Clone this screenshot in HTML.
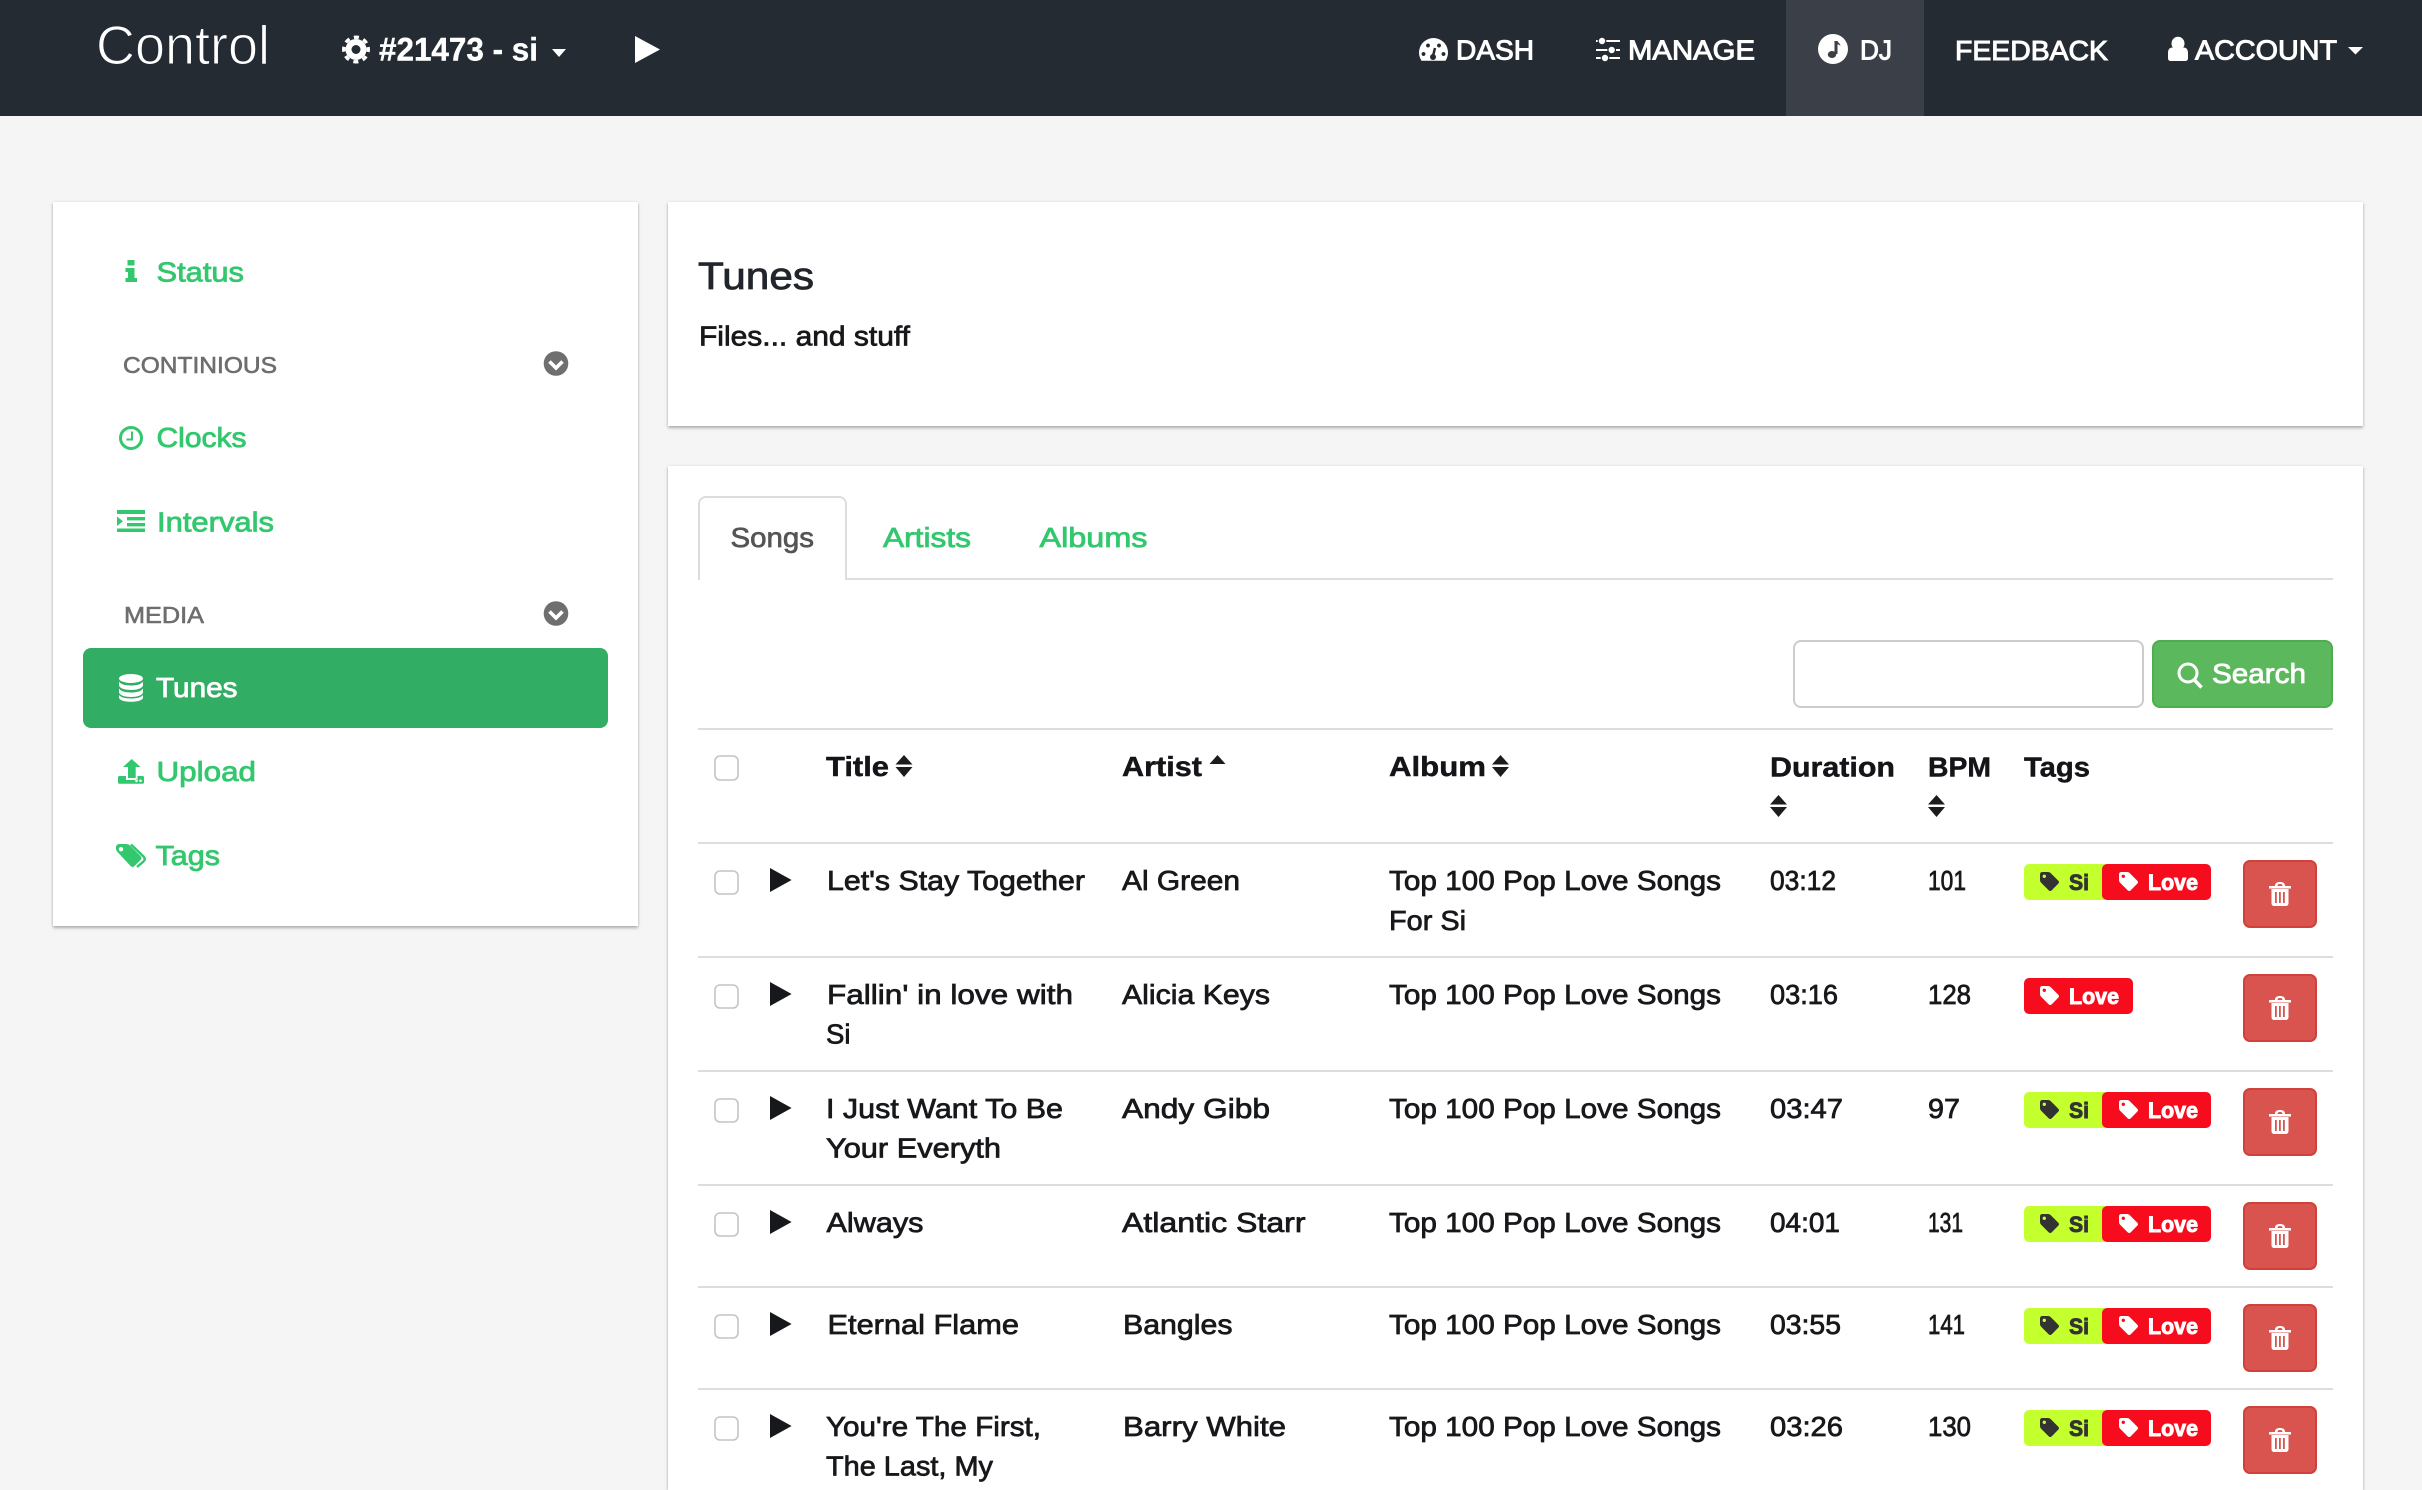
<!DOCTYPE html>
<html lang="en"><head><meta charset="utf-8"><title>Control - Tunes</title>
<style>
html,body{margin:0;padding:0;width:2422px;height:1490px;overflow:hidden;background:#f5f5f5;font-family:"Liberation Sans",sans-serif}
.a{position:absolute;box-sizing:border-box}
.card{background:#fff;box-shadow:0 2px 3px rgba(0,0,0,.28),0 0 2px rgba(0,0,0,.1)}
svg{position:absolute;left:0;top:0;display:block}
text{font-family:"Liberation Sans",sans-serif;font-size:28px}
.t{fill:#17181b;stroke:#17181b;stroke-width:.75px}
.h{fill:#141518;font-weight:700;stroke:#141518;stroke-width:.45px}
.g{fill:#33c76e;stroke:#33c76e;stroke-width:.8px}
.n{fill:#fff;stroke:#fff;stroke-width:1px}
.s{fill:#6f6d6d;font-size:23px;stroke:#6f6d6d;stroke-width:.6px}
.bw{fill:#fff;font-size:22px;font-weight:700;stroke:#fff;stroke-width:.9px}
.bd{fill:#333;font-size:22px;font-weight:700;stroke:#333;stroke-width:.9px}
</style></head><body>
<div class="a" style="left:0;top:0;width:2422px;height:116px;background:#242b33"></div>
<div class="a" style="left:1786px;top:0;width:138px;height:116px;background:#3b3f47"></div>
<div class="a card" style="left:53px;top:202px;width:585px;height:724px"></div>
<div class="a" style="left:83px;top:648px;width:525px;height:80px;background:#32ad64;border-radius:8px"></div>
<div class="a card" style="left:668px;top:202px;width:1695px;height:224px"></div>
<div class="a card" style="left:668px;top:466px;width:1695px;height:1024px"></div>
<div class="a" style="left:698px;top:578px;width:1635px;height:2px;background:#ddd"></div>
<div class="a" style="left:698px;top:496px;width:149px;height:84px;background:#fff;border:2px solid #ddd;border-bottom:0;border-radius:8px 8px 0 0"></div>
<div class="a" style="left:1793px;top:640px;width:351px;height:68px;background:#fff;border:2px solid #ccc;border-radius:8px"></div>
<div class="a" style="left:2152px;top:640px;width:181px;height:68px;background:#5cb85c;border:2px solid #4cae4c;border-radius:8px"></div>
<div class="a" style="left:698px;top:728px;width:1635px;height:2px;background:#ddd"></div>
<div class="a" style="left:698px;top:842px;width:1635px;height:2px;background:#ddd"></div>
<div class="a" style="left:698px;top:956px;width:1635px;height:2px;background:#ddd"></div>
<div class="a" style="left:698px;top:1070px;width:1635px;height:2px;background:#ddd"></div>
<div class="a" style="left:698px;top:1184px;width:1635px;height:2px;background:#ddd"></div>
<div class="a" style="left:698px;top:1286px;width:1635px;height:2px;background:#ddd"></div>
<div class="a" style="left:698px;top:1388px;width:1635px;height:2px;background:#ddd"></div>

<svg width="2422" height="1490" viewBox="0 0 2422 1490" xmlns="http://www.w3.org/2000/svg">
<defs>
<g id="sort"><path d="M8.5 0L17 9.5H0zM0 12H17L8.5 22z" fill="#1c1c1e"/></g>
<g id="chev"><circle cx="0" cy="0" r="12.3" fill="#6f6f6f"/><path d="M-6.5-2L0 4.5 6.500-2" fill="none" stroke="#fff" stroke-width="3.6"/></g>
<g id="ctl">
<rect x="715" y="28" width="23" height="23" rx="5" fill="#fff" stroke="#c4c4c4" stroke-width="1.6"/>
<path d="M770 25L791.600 37 770 49z" fill="#17181b"/>
<rect x="2244" y="18" width="72" height="66" rx="6" fill="#d9534f" stroke="#d0413c" stroke-width="2"/>
<g fill="#fff"><path d="M2269 43h22v2.500h-22zM2275 43c0-3 2-4 5-4s5 1 5 4h-2.500c0-1.500-1-2-2.500-2s-2.500.5-2.500 2z"/>
<path fill-rule="evenodd" d="M2271.500 46h17v14c0 2-1 3-3 3h-11c-2 0-3-1-3-3zM2275 49v11h1.800V49zM2279 49v11h1.800V49zM2283 49v11h1.800V49z"/></g>
</g>
<path id="tag" fill-rule="evenodd" d="M0 2.500Q0 0 2.500 0H8Q9.600 0 10.600 1L18.200 8.600Q19.800 10.200 18.200 11.800L11.800 18.200Q10.200 19.800 8.600 18.200L1 10.600Q0 9.600 0 8zM4.300 2.600A1.700 1.700 0 1 0 4.301 6 1.700 1.700 0 1 0 4.300 2.600z"/>
</defs>

<!-- navbar -->
<text x="96" y="64" textLength="174" lengthAdjust="spacingAndGlyphs" style="font-size:55px;fill:#fff;stroke:#242b33;stroke-width:1.1px">Control</text>
<circle cx="356" cy="49.500" r="7.500" fill="none" stroke="#fff" stroke-width="6"/>
<circle cx="356" cy="49.500" r="12.300" fill="none" stroke="#fff" stroke-width="3.400" stroke-dasharray="5 4.660" transform="rotate(-11.500 356 49.500)"/>
<text x="379" y="60.500" textLength="159" lengthAdjust="spacingAndGlyphs" style="font-size:32px;font-weight:700;fill:#fff;stroke:#fff;stroke-width:.4px">#21473 - si</text>
<path d="M552 49H566L559 57z" fill="#fff"/>
<path d="M635 36L660 49.500 635 63z" fill="#fff"/>

<path fill="#fff" fill-rule="evenodd" d="M1421.500 60.700A14.500 14.500 0 1 1 1445.500 60.700zM1428 43.500a2 2 0 1 0 .01 0zM1439 43.500a2 2 0 1 0 .01 0zM1423.500 52a2 2 0 1 0 .01 0zM1443.500 52a2 2 0 1 0 .01 0z"/>
<path d="M1435 48L1433 56" stroke="#242b33" stroke-width="2.500" fill="none"/>
<circle cx="1433" cy="57" r="3" fill="#242b33"/>
<text x="1456" y="59.500" textLength="78" lengthAdjust="spacingAndGlyphs" class="n">DASH</text>
<g fill="#fff"><rect x="1596" y="40" width="24" height="2"/><rect x="1596" y="49" width="24" height="2"/><rect x="1596" y="57" width="24" height="2"/></g>
<g fill="#fff" stroke="#242b33" stroke-width="1.200"><circle cx="1602" cy="41" r="3.800"/><circle cx="1611.700" cy="50" r="3.800"/><circle cx="1605" cy="58" r="3.800"/></g>
<text x="1628" y="59.500" textLength="127" lengthAdjust="spacingAndGlyphs" class="n">MANAGE</text>
<circle cx="1833" cy="49" r="15" fill="#fff"/>
<ellipse cx="1832" cy="54.500" rx="4.200" ry="3.500" fill="#3b3f47"/>
<path d="M1834.500 41h3v13h-3zM1837.500 41c.6 1.800 2.600 2.200 3 4.800-1.200-1-2.200-1.300-3-1.500z" fill="#3b3f47"/>
<text x="1860" y="59.500" textLength="32" lengthAdjust="spacingAndGlyphs" class="n">DJ</text>
<text x="1955" y="60" textLength="153" lengthAdjust="spacingAndGlyphs" class="n">FEEDBACK</text>
<g fill="#fff"><ellipse cx="2178" cy="43.500" rx="6.500" ry="6.800"/><path d="M2168 53c0-4 2-5.500 4.500-5.500 3 2 8 2 11 0 2.500 0 4.500 1.500 4.500 5.500v5c0 2-1 3-3 3h-14c-2 0-3-1-3-3z"/></g>
<text x="2195" y="59.500" textLength="142" lengthAdjust="spacingAndGlyphs" class="n">ACCOUNT</text>
<path d="M2348 47H2363L2355.500 54.500z" fill="#fff"/>

<!-- sidebar -->
<path fill="#33c76e" d="M127.500 260h7v5.500h-7zM125.500 268h9v10h2.500v4h-11.500v-4h2.500v-6h-2.500z"/>
<text x="156.500" y="281.500" textLength="87.500" lengthAdjust="spacingAndGlyphs" class="g">Status</text>
<text x="123" y="373" textLength="154" lengthAdjust="spacingAndGlyphs" class="s">CONTINIOUS</text>
<use href="#chev" x="556" y="363.500"/>
<circle cx="131" cy="438" r="10.500" fill="none" stroke="#33c76e" stroke-width="3"/>
<path d="M132 431.500V439.500H126.500" fill="none" stroke="#33c76e" stroke-width="2"/>
<text x="156.500" y="447" textLength="90" lengthAdjust="spacingAndGlyphs" class="g">Clocks</text>
<path fill="#33c76e" d="M117 510h28v4H117zM127 517h18v3.400H127zM127 523h18v3.400H127zM117 528.500h28v3.500H117zM117 516.500L123 521.200 117 526z"/>
<text x="157" y="531.500" textLength="117" lengthAdjust="spacingAndGlyphs" class="g">Intervals</text>
<text x="124" y="623" textLength="80" lengthAdjust="spacingAndGlyphs" class="s">MEDIA</text>
<use href="#chev" x="556" y="613.500"/>
<g fill="#fff"><ellipse cx="131" cy="678.500" rx="12" ry="4.500"/>
<path d="M119 681.500c2 3 6.500 4 12 4s10-1 12-4v4c-1 3-6 4.500-12 4.500s-11-1.500-12-4.500z"/>
<path d="M119 688.500c2 3 6.500 4 12 4s10-1 12-4v4c-1 3-6 4.500-12 4.500s-11-1.500-12-4.500z"/>
<path d="M119 695c2 2.500 6.500 3.500 12 3.500s10-1 12-3.500v3c-1 2.500-6 3.800-12 3.800s-11-1.300-12-3.800z"/></g>
<text x="156" y="697" textLength="81.500" lengthAdjust="spacingAndGlyphs" style="fill:#fff;stroke:#fff;stroke-width:.8px">Tunes</text>
<path fill="#33c76e" fill-rule="evenodd" d="M131.700 759L140.500 767H135.700V778H128V767H123zM118 777.500q0-1.500 1.500-1.500H126V780H137.500V776H142.500q1.500 0 1.500 1.500V782.300q0 1.500-1.500 1.500H119.500q-1.500 0-1.500-1.500zM136.500 779.500a1.300 1.300 0 1 0 .01 0zM140.500 779.500a1.300 1.300 0 1 0 .01 0z"/>
<text x="156.500" y="781" textLength="99.500" lengthAdjust="spacingAndGlyphs" class="g">Upload</text>
<path fill="#33c76e" fill-rule="evenodd" d="M116 847.500q0-3.500 3.500-3.500h7q2 0 3.500 1.500l10.500 10.500q2 2 0 4l-6 6q-2 2-4 0L117.500 852q-1.500-1.500-1.500-3zM121 847a2.200 2.200 0 1 0 .01 0z"/>
<path d="M131 844.500L143.500 856.500Q146 859 143.500 861.500L137 867" fill="none" stroke="#33c76e" stroke-width="2.400"/>
<text x="155.500" y="865" textLength="64.500" lengthAdjust="spacingAndGlyphs" class="g">Tags</text>

<!-- header card -->
<text x="698" y="289" textLength="116" lengthAdjust="spacingAndGlyphs" style="font-size:38px;fill:#22252b;stroke:#22252b;stroke-width:.8px">Tunes</text>
<text x="699" y="345.500" textLength="211" lengthAdjust="spacingAndGlyphs" class="t">Files... and stuff</text>

<!-- tabs -->
<text x="730.500" y="547" textLength="83.500" lengthAdjust="spacingAndGlyphs" style="fill:#555;stroke:#555;stroke-width:.7px">Songs</text>
<text x="883" y="547" textLength="88" lengthAdjust="spacingAndGlyphs" class="g">Artists</text>
<text x="1039.500" y="547" textLength="108" lengthAdjust="spacingAndGlyphs" class="g">Albums</text>

<!-- search -->
<circle cx="2188" cy="673" r="9" fill="none" stroke="#fff" stroke-width="3"/>
<path d="M2194.500 680L2201.500 687.500" stroke="#fff" stroke-width="3.500" fill="none"/>
<text x="2212" y="683" textLength="94" lengthAdjust="spacingAndGlyphs" style="fill:#fff;stroke:#fff;stroke-width:.8px">Search</text>

<!-- table head -->
<rect x="715" y="756" width="23" height="24" rx="5" fill="#fff" stroke="#c4c4c4" stroke-width="1.600"/>
<text x="826" y="776" textLength="63" lengthAdjust="spacingAndGlyphs" class="h">Title</text>
<use href="#sort" x="895.500" y="755"/>
<text x="1122" y="776" textLength="80" lengthAdjust="spacingAndGlyphs" class="h">Artist</text>
<path d="M1209.500 764L1217.500 755 1225.500 764z" fill="#1c1c1e"/>
<text x="1389" y="776" textLength="97" lengthAdjust="spacingAndGlyphs" class="h">Album</text>
<use href="#sort" x="1492" y="755"/>
<text x="1770" y="776.500" textLength="125" lengthAdjust="spacingAndGlyphs" class="h">Duration</text>
<use href="#sort" x="1770" y="795"/>
<text x="1928" y="776.500" textLength="63" lengthAdjust="spacingAndGlyphs" class="h">BPM</text>
<use href="#sort" x="1928" y="795"/>
<text x="2024" y="776.500" textLength="66" lengthAdjust="spacingAndGlyphs" class="h">Tags</text>

<!-- row 1 -->
<use href="#ctl" y="843"/>
<text x="827" y="890" textLength="258" lengthAdjust="spacingAndGlyphs" class="t">Let's Stay Together</text>
<text x="1122" y="890" textLength="118" lengthAdjust="spacingAndGlyphs" class="t">Al Green</text>
<text x="1389" y="890" textLength="332" lengthAdjust="spacingAndGlyphs" class="t">Top 100 Pop Love Songs</text>
<text x="1389" y="930" textLength="77" lengthAdjust="spacingAndGlyphs" class="t">For Si</text>
<text x="1770" y="890" textLength="66" lengthAdjust="spacingAndGlyphs" class="t">03:12</text>
<text x="1928" y="890" textLength="38" lengthAdjust="spacingAndGlyphs" class="t">101</text>
<rect x="2024" y="864" width="84" height="36" rx="5" fill="#c4ff2e"/>
<rect x="2102" y="864" width="109" height="36" rx="5" fill="#f70c1e"/>
<use href="#tag" x="2040" y="872" fill="#333"/>
<text x="2069" y="890" textLength="20" lengthAdjust="spacingAndGlyphs" class="bd">Si</text>
<use href="#tag" x="2119" y="872" fill="#fff"/>
<text x="2148" y="890" textLength="50" lengthAdjust="spacingAndGlyphs" class="bw">Love</text>

<!-- row 2 -->
<use href="#ctl" y="957"/>
<text x="827" y="1004" textLength="246" lengthAdjust="spacingAndGlyphs" class="t">Fallin' in love with</text>
<text x="826" y="1043.500" textLength="24.500" lengthAdjust="spacingAndGlyphs" class="t">Si</text>
<text x="1122" y="1004" textLength="148" lengthAdjust="spacingAndGlyphs" class="t">Alicia Keys</text>
<text x="1389" y="1004" textLength="332" lengthAdjust="spacingAndGlyphs" class="t">Top 100 Pop Love Songs</text>
<text x="1770" y="1004" textLength="68" lengthAdjust="spacingAndGlyphs" class="t">03:16</text>
<text x="1928" y="1004" textLength="43" lengthAdjust="spacingAndGlyphs" class="t">128</text>
<rect x="2024" y="978" width="109" height="36" rx="5" fill="#f70c1e"/>
<use href="#tag" x="2040" y="986" fill="#fff"/>
<text x="2069" y="1004" textLength="50" lengthAdjust="spacingAndGlyphs" class="bw">Love</text>

<!-- row 3 -->
<use href="#ctl" y="1071"/>
<text x="826" y="1118" textLength="237" lengthAdjust="spacingAndGlyphs" class="t">I Just Want To Be</text>
<text x="826" y="1157.500" textLength="175" lengthAdjust="spacingAndGlyphs" class="t">Your Everyth</text>
<text x="1122" y="1118" textLength="148" lengthAdjust="spacingAndGlyphs" class="t">Andy Gibb</text>
<text x="1389" y="1118" textLength="332" lengthAdjust="spacingAndGlyphs" class="t">Top 100 Pop Love Songs</text>
<text x="1770" y="1118" textLength="73" lengthAdjust="spacingAndGlyphs" class="t">03:47</text>
<text x="1928" y="1118" textLength="32" lengthAdjust="spacingAndGlyphs" class="t">97</text>
<rect x="2024" y="1092" width="84" height="36" rx="5" fill="#c4ff2e"/>
<rect x="2102" y="1092" width="109" height="36" rx="5" fill="#f70c1e"/>
<use href="#tag" x="2040" y="1100" fill="#333"/>
<text x="2069" y="1118" textLength="20" lengthAdjust="spacingAndGlyphs" class="bd">Si</text>
<use href="#tag" x="2119" y="1100" fill="#fff"/>
<text x="2148" y="1118" textLength="50" lengthAdjust="spacingAndGlyphs" class="bw">Love</text>

<!-- row 4 -->
<use href="#ctl" y="1185"/>
<text x="826.500" y="1232" textLength="97" lengthAdjust="spacingAndGlyphs" class="t">Always</text>
<text x="1122" y="1232" textLength="183.500" lengthAdjust="spacingAndGlyphs" class="t">Atlantic Starr</text>
<text x="1389" y="1232" textLength="332" lengthAdjust="spacingAndGlyphs" class="t">Top 100 Pop Love Songs</text>
<text x="1770" y="1232" textLength="70" lengthAdjust="spacingAndGlyphs" class="t">04:01</text>
<text x="1928" y="1232" textLength="35" lengthAdjust="spacingAndGlyphs" class="t">131</text>
<rect x="2024" y="1206" width="84" height="36" rx="5" fill="#c4ff2e"/>
<rect x="2102" y="1206" width="109" height="36" rx="5" fill="#f70c1e"/>
<use href="#tag" x="2040" y="1214" fill="#333"/>
<text x="2069" y="1232" textLength="20" lengthAdjust="spacingAndGlyphs" class="bd">Si</text>
<use href="#tag" x="2119" y="1214" fill="#fff"/>
<text x="2148" y="1232" textLength="50" lengthAdjust="spacingAndGlyphs" class="bw">Love</text>

<!-- row 5 -->
<use href="#ctl" y="1287"/>
<text x="827.500" y="1334" textLength="191.500" lengthAdjust="spacingAndGlyphs" class="t">Eternal Flame</text>
<text x="1123" y="1334" textLength="109.500" lengthAdjust="spacingAndGlyphs" class="t">Bangles</text>
<text x="1389" y="1334" textLength="332" lengthAdjust="spacingAndGlyphs" class="t">Top 100 Pop Love Songs</text>
<text x="1770" y="1334" textLength="71" lengthAdjust="spacingAndGlyphs" class="t">03:55</text>
<text x="1928" y="1334" textLength="37" lengthAdjust="spacingAndGlyphs" class="t">141</text>
<rect x="2024" y="1308" width="84" height="36" rx="5" fill="#c4ff2e"/>
<rect x="2102" y="1308" width="109" height="36" rx="5" fill="#f70c1e"/>
<use href="#tag" x="2040" y="1316" fill="#333"/>
<text x="2069" y="1334" textLength="20" lengthAdjust="spacingAndGlyphs" class="bd">Si</text>
<use href="#tag" x="2119" y="1316" fill="#fff"/>
<text x="2148" y="1334" textLength="50" lengthAdjust="spacingAndGlyphs" class="bw">Love</text>

<!-- row 6 -->
<use href="#ctl" y="1389"/>
<text x="826" y="1436" textLength="215" lengthAdjust="spacingAndGlyphs" class="t">You're The First,</text>
<text x="826" y="1475.500" textLength="167" lengthAdjust="spacingAndGlyphs" class="t">The Last, My</text>
<text x="1123" y="1436" textLength="163" lengthAdjust="spacingAndGlyphs" class="t">Barry White</text>
<text x="1389" y="1436" textLength="332" lengthAdjust="spacingAndGlyphs" class="t">Top 100 Pop Love Songs</text>
<text x="1770" y="1436" textLength="73" lengthAdjust="spacingAndGlyphs" class="t">03:26</text>
<text x="1928" y="1436" textLength="43" lengthAdjust="spacingAndGlyphs" class="t">130</text>
<rect x="2024" y="1410" width="84" height="36" rx="5" fill="#c4ff2e"/>
<rect x="2102" y="1410" width="109" height="36" rx="5" fill="#f70c1e"/>
<use href="#tag" x="2040" y="1418" fill="#333"/>
<text x="2069" y="1436" textLength="20" lengthAdjust="spacingAndGlyphs" class="bd">Si</text>
<use href="#tag" x="2119" y="1418" fill="#fff"/>
<text x="2148" y="1436" textLength="50" lengthAdjust="spacingAndGlyphs" class="bw">Love</text>
</svg>
</body></html>
